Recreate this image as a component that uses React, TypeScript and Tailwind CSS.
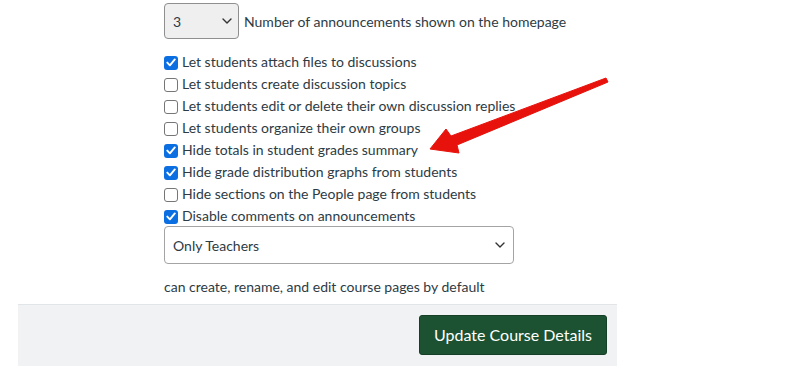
const OPTIONS = [
  { label: 'Let students attach files to discussions', checked: true },
  { label: 'Let students create discussion topics', checked: false },
  { label: 'Let students edit or delete their own discussion replies', checked: false },
  { label: 'Let students organize their own groups', checked: false },
  { label: 'Hide totals in student grades summary', checked: true },
  { label: 'Hide grade distribution graphs from students', checked: true },
  { label: 'Hide sections on the People page from students', checked: false },
  { label: 'Disable comments on announcements', checked: true },
];

function Chevron() {
  return (
    <svg width="10" height="6" viewBox="0 0 10 6" fill="none">
      <path d="M1 1l4 4 4-4" stroke="#333" strokeWidth="1.4" strokeLinecap="round" strokeLinejoin="round" />
    </svg>
  );
}

function Box({ checked }: { checked: boolean }) {
  if (checked) {
    return (
      <span className="flex h-[14px] w-[14px] shrink-0 items-center justify-center rounded-[3px] bg-[#0b6fe2]">
        <svg width="10" height="9" viewBox="0 0 10 9" fill="none">
          <path d="M1.3 4.6l2.6 2.7L8.8 1.4" stroke="#fff" strokeWidth="1.9" strokeLinecap="round" strokeLinejoin="round" />
        </svg>
      </span>
    );
  }
  return <span className="block h-[14px] w-[14px] shrink-0 rounded-[3px] border border-[#767676] bg-white" />;
}

export default function App() {
  return (
    <div
      className="relative h-[382px] w-[794px] overflow-hidden bg-white text-[14px] text-[#2d3b45]"
      style={{ fontFamily: 'Lato, "Open Sans", sans-serif' }}
    >
      <div className="ml-[18px] w-[599px] pt-[3px]">
        <div className="pl-[146px]">
          <div className="flex items-center gap-[5px]">
            <div className="flex h-[36px] w-[75px] items-center justify-between rounded-[4px] border border-[#8f8f8f] bg-[#efefef] pl-[8px] pr-[6px] text-[14px]">
              <span>3</span>
              <Chevron />
            </div>
            <span>Number of announcements shown on the homepage</span>
          </div>

          <div className="mt-[11px] flex flex-col">
            {OPTIONS.map(({ label, checked }) => (
              <label key={label} className="flex h-[22px] items-center gap-[4px]">
                <span className="mt-[3px] block">
                  <Box checked={checked} />
                </span>
                <span>{label}</span>
              </label>
            ))}
          </div>

          <div className="flex h-[38px] w-[350px] items-center justify-between rounded-[4px] border border-[#a4a4a4] bg-white pl-[8px] pr-[8px]">
            <span>Only Teachers</span>
            <Chevron />
          </div>

          <p className="mt-[13px] leading-[20px]">can create, rename, and edit course pages by default</p>
        </div>

        <div className="mt-[7px] flex justify-end border-t border-[#e2e5e8] bg-[#f1f2f3] px-[10px] pb-[11px] pt-[10px]">
          <button className="h-[40px] w-[188px] rounded-[3px] border border-[#163f27] bg-[#1c5232] text-[16px] text-white">
            Update Course Details
          </button>
        </div>
      </div>

      {/* Annotation arrow */}
      <svg className="pointer-events-none absolute left-0 top-0" width="794" height="382">
        <polygon
          points="606,78 608,82 457,145 459,153 430,149 446,129 451,136"
          fill="#e8120c"
          stroke="#e8120c"
          strokeWidth="1"
          strokeLinejoin="round"
        />
      </svg>
    </div>
  );
}
